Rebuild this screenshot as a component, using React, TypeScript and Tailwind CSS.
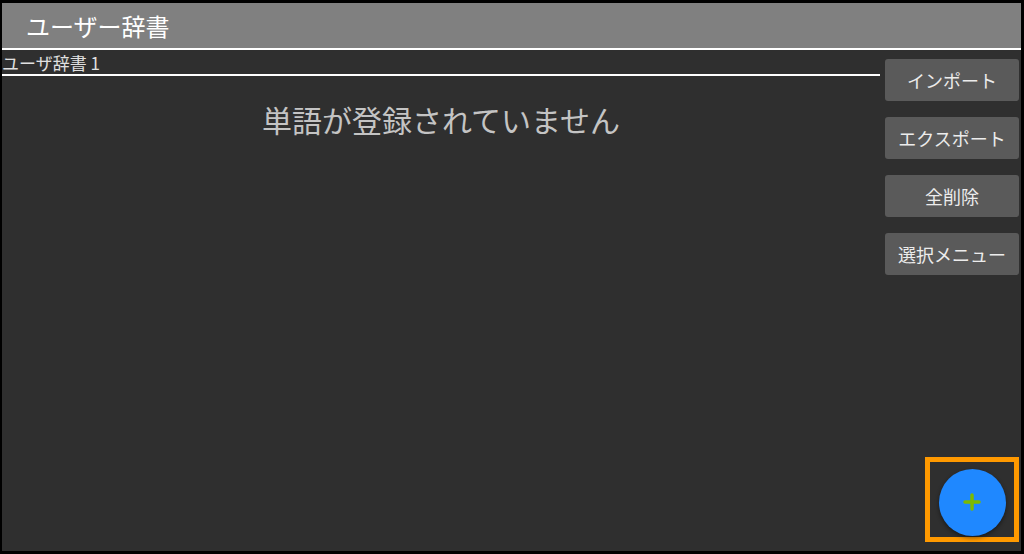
import { Plus } from 'lucide-react';

const actions = ['インポート', 'エクスポート', '全削除', '選択メニュー'];

export default function App() {
  return (
    <div
      className="relative w-[1024px] h-[554px] bg-black pt-[3px] pl-[2px] pr-[3px] pb-[3px] overflow-hidden"
      style={{ fontFamily: '"Noto Sans CJK JP", "Noto Sans", sans-serif' }}
    >
      <div className="flex flex-col h-full bg-[#2f2f2f]">
        {/* Title bar */}
        <div className="h-[45px] bg-[#808080] flex items-center pl-[24px] text-[24px] text-white leading-none">
          ユーザー辞書
        </div>
        <div className="h-[2px] bg-white" />

        <div className="flex flex-1 min-h-0">
          {/* Dictionary list */}
          <div className="flex-1 flex flex-col">
            <div className="h-[24px] flex items-center text-[17px] text-[#e0e0e0] leading-none">
              ユーザ辞書 1
            </div>
            <div className="h-[2px] bg-white" />
            <div className="mt-[28px] text-center text-[30px] text-[#c4c4c4] leading-none">
              単語が登録されていません
            </div>
          </div>

          {/* Side actions */}
          <div className="w-[134px] ml-[5px] mr-[2px] pt-[9px] flex flex-col gap-[16px]">
            {actions.map((label) => (
              <button
                key={label}
                className="h-[42px] rounded-[3px] bg-[#5a5a5a] text-[18px] text-[#ececec] leading-none"
              >
                {label}
              </button>
            ))}
          </div>
        </div>
      </div>

      {/* Floating add button */}
      <div className="absolute left-[925px] top-[457px] w-[94px] h-[85px] border-[5px] border-[#ff9900] flex items-center justify-center">
        <button className="w-[67px] h-[67px] mt-[5px] rounded-full bg-[#1f88ff] shadow-[0_2px_4px_rgba(0,0,0,0.45)] flex items-center justify-center">
          <Plus size={24} strokeWidth={3.5} color="#7cba00" />
        </button>
      </div>
    </div>
  );
}
